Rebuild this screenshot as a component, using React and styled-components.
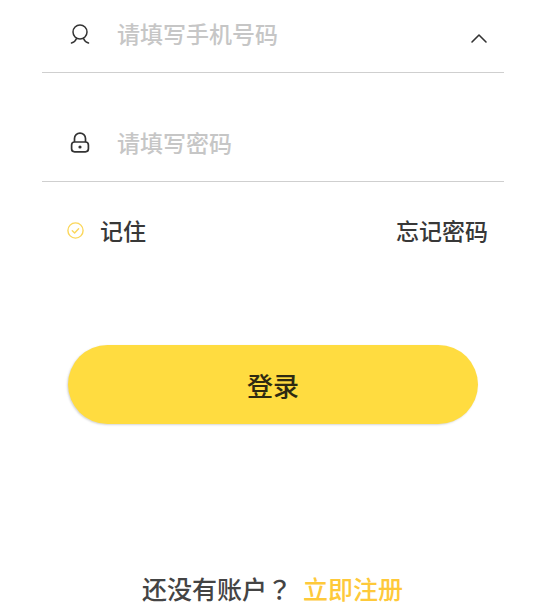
import React from "react";
import styled, { createGlobalStyle } from "styled-components";

const GlobalStyle = createGlobalStyle`
  html, body {
    margin: 0;
    padding: 0;
    height: 100%;
    background: #fff;
    overflow: hidden;
    font-family: "Noto Sans CJK SC", "Noto Sans", sans-serif;
  }
`;

const Page = styled.div`
  width: 539px;
  height: 614px;
  display: flex;
  flex-direction: column;
  box-sizing: border-box;
  padding: 0 35px 0 42px;
`;

const Field = styled.div`
  height: ${({ $height }) => $height}px;
  display: flex;
  align-items: flex-end;
  box-sizing: border-box;
  padding: 0 15px 23px 27px;
  border-bottom: 1.5px solid #cfcfcf;
`;

const IconSlot = styled.div`
  width: 22px;
  height: 32px;
  display: flex;
  align-items: center;
  justify-content: center;
  margin-right: 27px;
  color: #333;
`;

const Placeholder = styled.div`
  flex: 1;
  font-size: 23px;
  font-weight: 500;
  line-height: 32px;
  color: #c6c6c6;
  margin-left: -1px;
`;

const Chevron = styled.svg`
  width: 20px;
  height: 12px;
  margin-bottom: 5px;
`;

const OptionsRow = styled.div`
  display: flex;
  align-items: center;
  justify-content: space-between;
  padding: 32px 16px 0 25px;
  height: 32px;
`;

const Remember = styled.div`
  display: flex;
  align-items: center;
  gap: 16px;
`;

const OptionText = styled.span`
  font-size: 23px;
  font-weight: 500;
  line-height: 32px;
  color: #383838;
`;

const LoginButton = styled.button`
  display: block;
  width: 410px;
  height: 79px;
  margin: 99px 0 0 26px;
  border: 0;
  border-radius: 40px;
  background: #ffdc40;
  box-shadow: -1px 1px 2px rgba(120, 120, 120, 0.3);
  font-family: inherit;
  font-size: 26px;
  font-weight: 500;
  color: #2e2a12;
`;

const Footer = styled.div`
  margin-top: 146px;
  padding-left: 100px;
  font-size: 25px;
  font-weight: 500;
  line-height: 36px;
  color: #444;
  white-space: nowrap;
`;

const QuestionMark = styled.span`
  font-family: "Noto Sans CJK TC", sans-serif;
  margin-right: 11px;
`;

const RegisterLink = styled.span`
  color: #fec93a;
`;

const UserIcon = () => (
  <svg width="20" height="22" viewBox="0 0 20 22" fill="none" stroke="#333" strokeWidth="1.5" strokeLinecap="round">
    <circle cx="10" cy="10" r="7" />
    <path d="M1.5 21c2.2-.6 4-2 5-4.6M18.5 21c-2.2-.6-4-2-5-4.6" />
  </svg>
);

const LockIcon = () => (
  <svg width="20" height="21" viewBox="0 0 20 21" fill="none" stroke="#333" strokeWidth="1.7">
    <path d="M4.5 10V6.6a5.5 5.5 0 0 1 11 0V10" />
    <rect x="1.6" y="10" width="16.8" height="9.8" rx="3" />
    <circle cx="10" cy="15" r="1.6" fill="#333" stroke="none" />
  </svg>
);

const CheckIcon = () => (
  <svg width="17" height="17" viewBox="0 0 17 17" fill="none" stroke="#fbd75b" strokeWidth="1.4" strokeLinecap="round" strokeLinejoin="round">
    <circle cx="8.5" cy="8.5" r="7.6" />
    <path d="M5.3 8.7l2.3 2.2 4-4.2" />
  </svg>
);

export default function App() {
  return (
    <>
      <GlobalStyle />
      <Page>
        <Field $height={73}>
          <IconSlot><UserIcon /></IconSlot>
          <Placeholder>请填写手机号码</Placeholder>
          <Chevron viewBox="0 0 20 12" fill="none" stroke="#333" strokeWidth="1.6" strokeLinecap="round" strokeLinejoin="round">
            <path d="M3 10l7-7 7 7" />
          </Chevron>
        </Field>
        <Field $height={109}>
          <IconSlot><LockIcon /></IconSlot>
          <Placeholder>请填写密码</Placeholder>
        </Field>
        <OptionsRow>
          <Remember>
            <CheckIcon />
            <OptionText>记住</OptionText>
          </Remember>
          <OptionText>忘记密码</OptionText>
        </OptionsRow>
        <LoginButton>登录</LoginButton>
        <Footer>
          还没有账户<QuestionMark>？</QuestionMark><RegisterLink>立即注册</RegisterLink>
        </Footer>
      </Page>
    </>
  );
}
